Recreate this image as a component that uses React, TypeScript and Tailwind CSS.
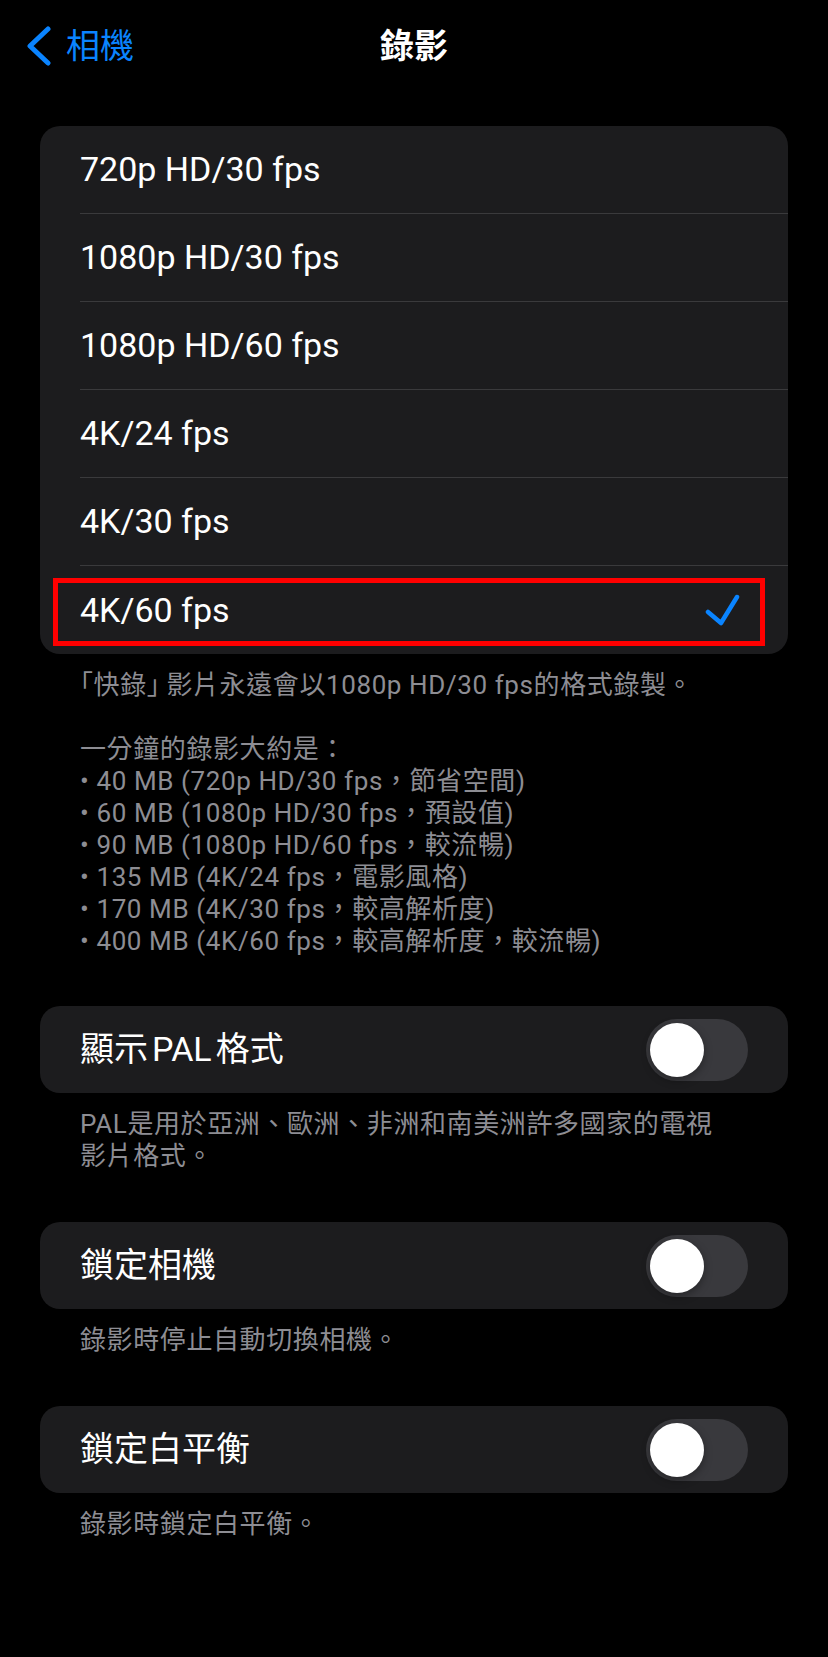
const options = [
  "720p HD/30 fps",
  "1080p HD/30 fps",
  "1080p HD/60 fps",
  "4K/24 fps",
  "4K/30 fps",
  "4K/60 fps",
];

const sizes = [
  "• 40 MB (720p HD/30 fps，節省空間)",
  "• 60 MB (1080p HD/30 fps，預設值)",
  "• 90 MB (1080p HD/60 fps，較流暢)",
  "• 135 MB (4K/24 fps，電影風格)",
  "• 170 MB (4K/30 fps，較高解析度)",
  "• 400 MB (4K/60 fps，較高解析度，較流暢)",
];

function Toggle() {
  return (
    <div className="w-[102px] h-[62px] rounded-full bg-[#39393d] p-[4px] flex items-center">
      <div className="w-[54px] h-[54px] rounded-full bg-white shadow-[0_3px_8px_rgba(0,0,0,0.35)]" />
    </div>
  );
}

function SwitchSection({ label, footer }: { label: React.ReactNode; footer: string[] }) {
  return (
    <div className="mb-[50px]">
      <div className="h-[87px] rounded-[20px] bg-[#1c1c1e] pl-[40px] pr-[40px] flex items-center justify-between">
        <span className="text-[34px] text-white">{label}</span>
        <Toggle />
      </div>
      <div className="pt-[15px] pl-[40px] text-[26px] leading-[32px] tracking-[0.6px] text-[#8d8d93]">
        {footer.map((line, i) => (
          <div key={i}>{line}</div>
        ))}
      </div>
    </div>
  );
}

export default function App() {
  return (
    <div
      className="w-[828px] min-h-[1657px] bg-black"
      style={{ fontFamily: "Roboto, 'Noto Sans CJK TC', sans-serif" }}
    >
      {/* Nav bar */}
      <div className="h-[92px] relative flex items-center pl-[25px]">
        <div className="flex items-center gap-[13px] text-[#0a84ff]">
          <svg width="28" height="40" viewBox="0 0 28 40" fill="none">
            <path d="M23 3 L5 20 L23 37" stroke="#0a84ff" strokeWidth="5" strokeLinecap="round" strokeLinejoin="round" />
          </svg>
          <span className="text-[34px] leading-none">相機</span>
        </div>
        <div className="absolute left-0 right-0 top-0 h-[92px] flex items-center justify-center pointer-events-none">
          <span className="text-[34px] font-semibold text-white leading-none">錄影</span>
        </div>
      </div>

      <div className="px-[40px] pt-[34px]">
        {/* Resolution list */}
        <div className="rounded-[20px] bg-[#1c1c1e] overflow-hidden">
          {options.map((opt, i) => {
            const last = i === options.length - 1;
            return (
              <div key={opt} className="relative h-[88px] pl-[40px]">
                <div
                  className={
                    "h-full flex items-center " + (last ? "" : "border-b border-[#3a3a3c]")
                  }
                >
                  <span className="text-[34px] text-white">{opt}</span>
                </div>
                {last && (
                  <>
                    <svg
                      className="absolute left-[664px] top-[27px]"
                      width="36"
                      height="34"
                      viewBox="0 0 36 34"
                      fill="none"
                    >
                      <path d="M4 19 L17 30 L33 4" stroke="#0a84ff" strokeWidth="4.5" strokeLinecap="round" strokeLinejoin="round" />
                    </svg>
                    <div className="absolute left-[13px] right-[23px] top-[12px] bottom-[8px] border-[5px] border-[#ff0000]" />
                  </>
                )}
              </div>
            );
          })}
        </div>
        <div className="pt-[15px] pb-[49px] pl-[40px] text-[26px] leading-[32px] tracking-[0.6px] text-[#8d8d93]">
          <div>
            <span className="[font-feature-settings:'halt']">「</span>快錄
            <span className="[font-feature-settings:'halt'] mr-[6px]">」</span>影片永遠會以1080p HD/30 fps的格式錄製。
          </div>
          <div>&nbsp;</div>
          <div>一分鐘的錄影大約是：</div>
          {sizes.map((s) => (
            <div key={s}>{s}</div>
          ))}
        </div>

        <SwitchSection
          label={
            <>
              顯示<span className="mx-[4px]">PAL</span>格式
            </>
          }
          footer={["PAL是用於亞洲、歐洲、非洲和南美洲許多國家的電視", "影片格式。"]}
        />
        <SwitchSection label="鎖定相機" footer={["錄影時停止自動切換相機。"]} />
        <SwitchSection label="鎖定白平衡" footer={["錄影時鎖定白平衡。"]} />
      </div>
    </div>
  );
}
